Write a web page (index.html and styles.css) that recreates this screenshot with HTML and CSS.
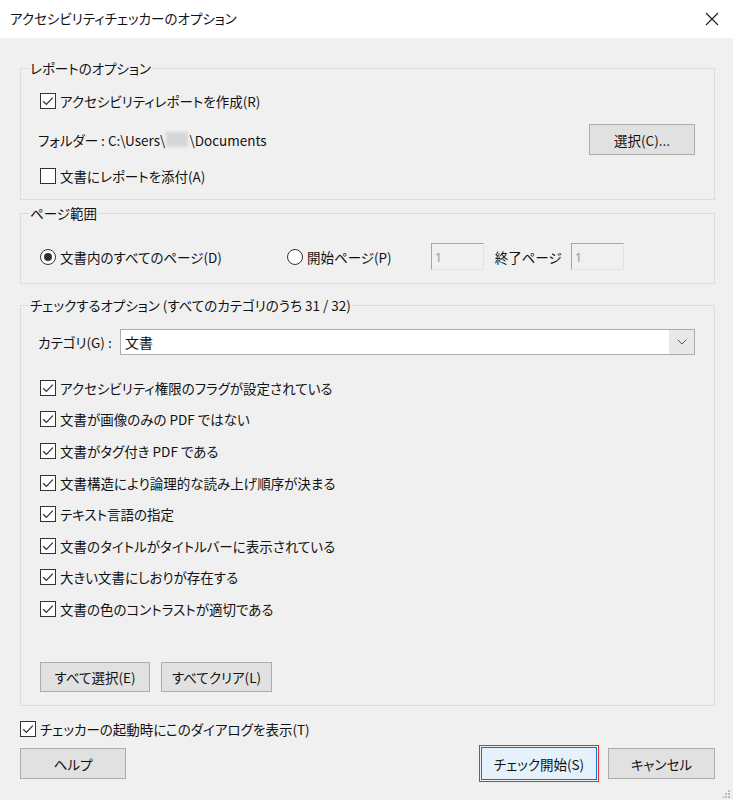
FILE: index.html
```html
<!DOCTYPE html>
<html lang="ja">
<head>
  <meta charset="UTF-8">
  <meta name="viewport" content="width=device-width, initial-scale=1.0">
  <title>アクセシビリティチェッカーのオプション</title>
  <link rel="stylesheet" href="styles.css">
</head>
<body>
  <div class="dialog">
    <div class="titlebar">
      <span class="title">アクセシビリティチェッカーのオプション</span>
      <svg class="close" width="14" height="14" viewBox="0 0 14 14">
        <path d="M1 1 L13 13 M13 1 L1 13" stroke="#1a1a1a" stroke-width="1.1" fill="none"/>
      </svg>
    </div>

    <div class="content">
      <!-- レポートのオプション -->
      <fieldset class="group">
        <legend>レポートのオプション</legend>
        <div class="group-body report-body">
          <label class="check-row">
            <span class="box"><svg width="14" height="14" viewBox="0 0 14 14"><path d="M2.2 7.2 L5.4 10.4 L11.8 3.6" stroke="#333" stroke-width="1.3" fill="none"/></svg></span>
            アクセシビリティレポートを作成(R)
          </label>
          <div class="folder-row">
            <span class="folder">フォルダー : C:\Users\<span class="masked"></span>\Documents</span>
            <button class="btn btn-select">選択(C)...</button>
          </div>
          <label class="check-row attach-row">
            <span class="box"></span>
            文書にレポートを添付(A)
          </label>
        </div>
      </fieldset>

      <!-- ページ範囲 -->
      <fieldset class="group group-range">
        <legend>ページ範囲</legend>
        <div class="group-body range-body">
          <div class="range-row">
            <label class="radio-item radio-all"><span class="radio checked"></span>文書内のすべてのページ(D)</label>
            <label class="radio-item"><span class="radio"></span>開始ページ(P)</label>
            <input class="page-input start-input" type="text" value="1" disabled>
            <span class="end-label">終了ページ</span>
            <input class="page-input" type="text" value="1" disabled>
          </div>
        </div>
      </fieldset>

      <!-- チェックするオプション -->
      <fieldset class="group group-options">
        <legend>チェックするオプション (すべてのカテゴリのうち 31 / 32)</legend>
        <div class="group-body options-body">
          <div class="category-row">
            <span class="category-label">カテゴリ(G) :</span>
            <div class="combo">
              <span class="combo-value">文書</span>
              <span class="combo-arrow"><svg width="10" height="6" viewBox="0 0 10 6"><path d="M0.8 0.8 L5 5 L9.2 0.8" stroke="#555" stroke-width="1" fill="none"/></svg></span>
            </div>
          </div>

          <div class="check-list">
            <label class="check-row list-row"><span class="box"><svg width="14" height="14" viewBox="0 0 14 14"><path d="M2.2 7.2 L5.4 10.4 L11.8 3.6" stroke="#333" stroke-width="1.3" fill="none"/></svg></span>アクセシビリティ権限のフラグが設定されている</label>
            <label class="check-row list-row"><span class="box"><svg width="14" height="14" viewBox="0 0 14 14"><path d="M2.2 7.2 L5.4 10.4 L11.8 3.6" stroke="#333" stroke-width="1.3" fill="none"/></svg></span>文書が画像のみの PDF ではない</label>
            <label class="check-row list-row"><span class="box"><svg width="14" height="14" viewBox="0 0 14 14"><path d="M2.2 7.2 L5.4 10.4 L11.8 3.6" stroke="#333" stroke-width="1.3" fill="none"/></svg></span>文書がタグ付き PDF である</label>
            <label class="check-row list-row"><span class="box"><svg width="14" height="14" viewBox="0 0 14 14"><path d="M2.2 7.2 L5.4 10.4 L11.8 3.6" stroke="#333" stroke-width="1.3" fill="none"/></svg></span>文書構造により論理的な読み上げ順序が決まる</label>
            <label class="check-row list-row"><span class="box"><svg width="14" height="14" viewBox="0 0 14 14"><path d="M2.2 7.2 L5.4 10.4 L11.8 3.6" stroke="#333" stroke-width="1.3" fill="none"/></svg></span>テキスト言語の指定</label>
            <label class="check-row list-row"><span class="box"><svg width="14" height="14" viewBox="0 0 14 14"><path d="M2.2 7.2 L5.4 10.4 L11.8 3.6" stroke="#333" stroke-width="1.3" fill="none"/></svg></span>文書のタイトルがタイトルバーに表示されている</label>
            <label class="check-row list-row"><span class="box"><svg width="14" height="14" viewBox="0 0 14 14"><path d="M2.2 7.2 L5.4 10.4 L11.8 3.6" stroke="#333" stroke-width="1.3" fill="none"/></svg></span>大きい文書にしおりが存在する</label>
            <label class="check-row list-row"><span class="box"><svg width="14" height="14" viewBox="0 0 14 14"><path d="M2.2 7.2 L5.4 10.4 L11.8 3.6" stroke="#333" stroke-width="1.3" fill="none"/></svg></span>文書の色のコントラストが適切である</label>
          </div>

          <div class="select-buttons">
            <button class="btn btn-all">すべて選択(E)</button>
            <button class="btn btn-clear">すべてクリア(L)</button>
          </div>
        </div>
      </fieldset>

      <label class="check-row startup-row">
        <span class="box"><svg width="14" height="14" viewBox="0 0 14 14"><path d="M2.2 7.2 L5.4 10.4 L11.8 3.6" stroke="#333" stroke-width="1.3" fill="none"/></svg></span>
        チェッカーの起動時にこのダイアログを表示(T)
      </label>

      <div class="footer">
        <button class="btn btn-help">ヘルプ</button>
        <div class="footer-right">
          <button class="btn btn-primary">チェック開始(S)</button>
          <button class="btn btn-cancel">キャンセル</button>
        </div>
      </div>
    </div>

    <svg class="grip" width="8" height="8" viewBox="0 0 8 8">
      <rect x="5" y="0" width="2" height="2" fill="#bdbdbd"/>
      <rect x="2" y="3" width="2" height="2" fill="#bdbdbd"/>
      <rect x="5" y="3" width="2" height="2" fill="#bdbdbd"/>
      <rect x="-1" y="6" width="2" height="2" fill="#bdbdbd"/>
      <rect x="2" y="6" width="2" height="2" fill="#bdbdbd"/>
      <rect x="5" y="6" width="2" height="2" fill="#bdbdbd"/>
    </svg>
  </div>
</body>
</html>
```

FILE: styles.css
```css
/* Basic reset */
* {
  margin: 0;
  padding: 0;
  box-sizing: border-box;
}

body {
  font-family: "Noto Sans CJK JP", "Noto Sans", sans-serif;
  font-size: 13.5px;
  font-feature-settings: "palt";
  color: #111;
  background-color: #f0f0f0;
}

.dialog {
  position: relative;
  width: 733px;
  height: 800px;
  background-color: #f0f0f0;
  overflow: hidden;
}

.titlebar {
  height: 38px;
  background-color: #fff;
  display: flex;
  align-items: center;
  justify-content: space-between;
  padding: 0 14px 2px 10px;
}

.title {
  font-size: 13.5px;
}

.close {
  margin-top: 1px;
}

.content {
  padding: 21px 18px 0 20px;
}

/* group boxes */
.group {
  border: 1px solid #dcdcdc;
  margin: 0;
  padding: 0;
  min-width: 0;
}

.group legend {
  margin-left: 8px;
  padding: 0 1px;
  line-height: 18px;
}

.group-body {
  padding: 0 19px;
}

.report-body {
  padding-top: 12px;
  padding-bottom: 11px;
}

.group-range {
  margin-top: 4px;
}

.range-body {
  padding-top: 21px;
  padding-bottom: 13px;
}

.group-options {
  margin-top: 12px;
}

.options-body {
  padding-top: 15px;
  padding-bottom: 13px;
}

/* checkbox */
.check-row {
  display: flex;
  align-items: center;
  height: 24px;
  gap: 4px;
}

.box {
  width: 16px;
  height: 16px;
  border: 1px solid #333;
  background-color: #fff;
  display: flex;
  align-items: center;
  justify-content: center;
  flex-shrink: 0;
}

.attach-row {
  margin-top: 9px;
}

.folder-row {
  display: flex;
  align-items: center;
  justify-content: space-between;
  height: 31px;
  margin-top: 11px;
}

.folder {
  margin-left: -2px;
  display: flex;
  align-items: center;
}

.masked {
  display: inline-block;
  width: 22px;
  height: 15px;
  margin: 0 1px;
  background-color: #d6d6d6;
  filter: blur(1.5px);
}

/* buttons */
.btn {
  font-family: inherit;
  font-size: 13.5px;
  font-feature-settings: "palt";
  color: #111;
  background-color: #e1e1e1;
  border: 1px solid #adadad;
  height: 31px;
}

.btn-select {
  width: 106px;
}

/* page range */
.range-row {
  display: flex;
  align-items: center;
  height: 27px;
}

.radio-item {
  display: flex;
  align-items: center;
  gap: 4px;
}

.radio-all {
  width: 247px;
}

.radio {
  width: 16px;
  height: 16px;
  border: 1px solid #333;
  border-radius: 50%;
  background-color: #fff;
  display: flex;
  align-items: center;
  justify-content: center;
}

.radio.checked::after {
  content: "";
  width: 8px;
  height: 8px;
  border-radius: 50%;
  background-color: #333;
}

.page-input {
  width: 53px;
  height: 27px;
  font-family: "Noto Sans", sans-serif;
  font-size: 13px;
  color: #9a9a9a;
  background-color: #f0f0f0;
  border: 1px solid;
  border-color: #a6a6a6 #e3e3e3 #e3e3e3 #a6a6a6;
  padding: 0 3px;
}

.start-input {
  margin-left: 39px;
}

.end-label {
  margin: 0 9px 0 11px;
}

/* category */
.category-row {
  display: flex;
  align-items: center;
  height: 26px;
}

.category-label {
  width: 82px;
  margin-left: -2px;
}

.combo {
  flex: 1;
  height: 26px;
  display: flex;
  border: 1px solid #adadad;
  background-color: #fff;
}

.combo-value {
  flex: 1;
  padding-left: 4px;
  line-height: 24px;
  font-size: 14px;
}

.combo-arrow {
  width: 25px;
  background-color: #e8e8e8;
  display: flex;
  align-items: center;
  justify-content: center;
}

.check-list {
  margin-top: 17px;
}

.list-row {
  height: 31.6px;
}

.select-buttons {
  margin-top: 37px;
  display: flex;
  gap: 11px;
}

.btn-all {
  width: 110px;
  height: 30px;
}

.btn-clear {
  width: 111px;
  height: 30px;
}

/* bottom */
.startup-row {
  margin-top: 14px;
  height: 18px;
}

.footer {
  margin-top: 9px;
  height: 34px;
  display: flex;
  align-items: center;
  justify-content: space-between;
}

.footer-right {
  display: flex;
  align-items: center;
  gap: 11px;
}

.btn-help {
  width: 106px;
}

.btn-primary {
  width: 116px;
  height: 33px;
  background-color: #e5f1fb;
  border-color: #0078d7;
  outline: 1px solid #ff2020;
  outline-offset: 1px;
}

.btn-cancel {
  width: 107px;
}

.grip {
  position: absolute;
  right: 2px;
  bottom: 2px;
}
```
